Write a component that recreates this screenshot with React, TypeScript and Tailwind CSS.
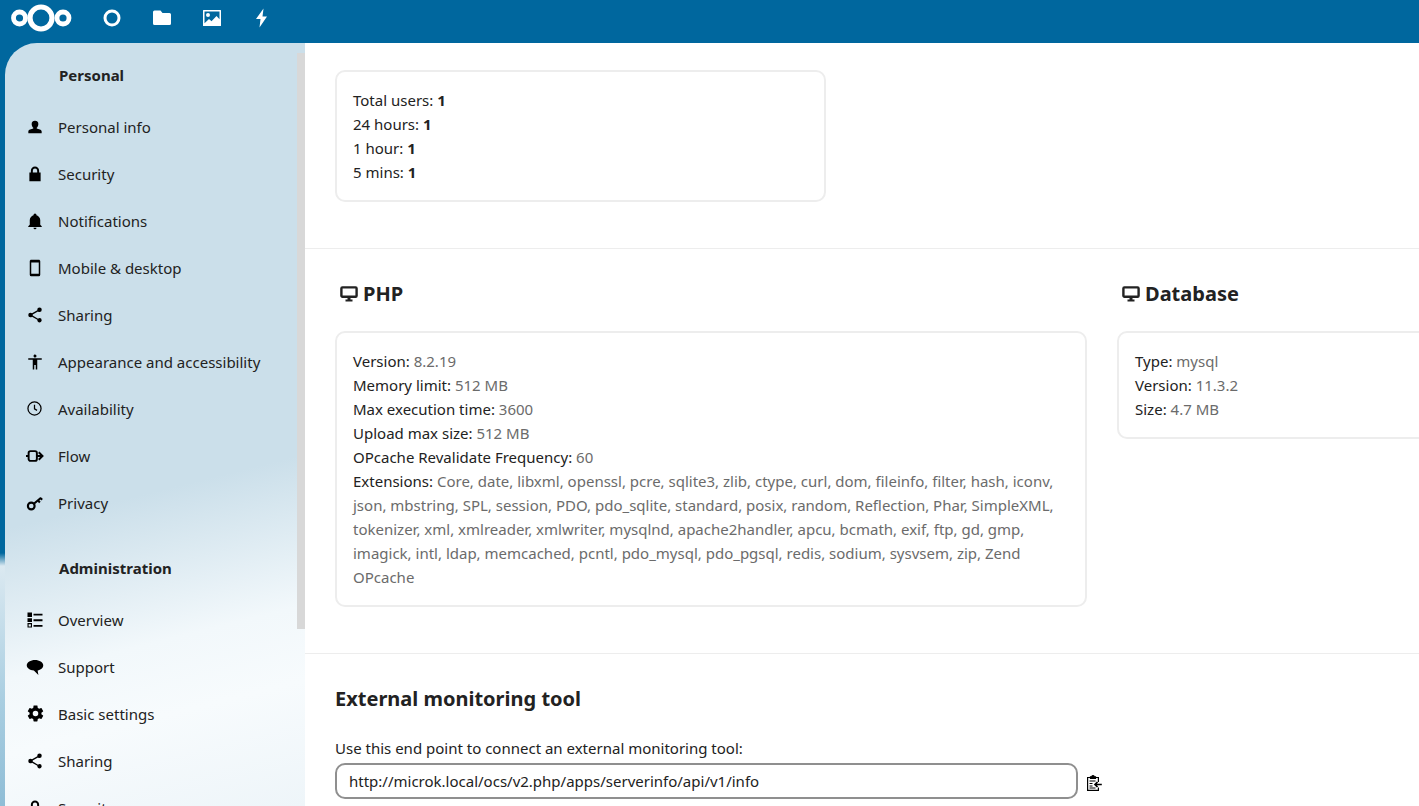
import React from "react";

const Solid = ({ d, className = "w-[18px] h-[18px]" }: { d: string; className?: string }) => (
  <svg viewBox="0 0 24 24" className={className} fill="currentColor">
    <path d={d} />
  </svg>
);

const person = "M12 2.500a5 5 0 0 1 5 5.300c0 2.300-1.200 4.400-2.400 5.200v1.400c2.600.9 7.400 1.600 7.400 4.300V21.500H2v-2.800c0-2.700 4.800-3.400 7.400-4.300V13C8.200 12.200 7 10.100 7 7.800A5 5 0 0 1 12 2.500Z";
const lock = "M12 2a5.500 5.500 0 0 0-5.500 5.500V10H4.500v11.500h15V10h-2V7.500A5.500 5.500 0 0 0 12 2Zm0 2.600a2.900 2.900 0 0 1 2.900 2.900V10H9.100V7.500A2.900 2.900 0 0 1 12 4.600Z";
const bell = "M21,19V20H3V19L5,17V11C5,7.900 7.030,5.170 10,4.290C10,4.190 10,4.100 10,4A2,2 0 0,1 12,2A2,2 0 0,1 14,4C14,4.100 14,4.190 14,4.290C16.970,5.170 19,7.900 19,11V17L21,19M14,21A2,2 0 0,1 12,23A2,2 0 0,1 10,21";
const phone = "M17,19.500H7V4.500H17M17,1H7C5.890,1 5,1.890 5,3V21A2,2 0 0,0 7,23H17A2,2 0 0,0 19,21V3C19,1.890 18.100,1 17,1Z";
const share = "M18,16.080C17.240,16.080 16.560,16.380 16.040,16.850L8.910,12.700C8.960,12.470 9,12.240 9,12C9,11.760 8.960,11.530 8.910,11.300L15.960,7.190C16.500,7.690 17.210,8 18,8A3,3 0 0,0 21,5A3,3 0 0,0 18,2A3,3 0 0,0 15,5C15,5.240 15.040,5.470 15.090,5.700L8.040,9.810C7.500,9.310 6.790,9 6,9A3,3 0 0,0 3,12A3,3 0 0,0 6,15C6.790,15 7.500,14.690 8.040,14.190L15.160,18.340C15.110,18.550 15.080,18.770 15.080,19C15.080,20.610 16.390,21.910 18,21.910C19.610,21.910 20.920,20.610 20.920,19A2.920,2.920 0 0,0 18,16.080Z";
const human = "M21 9H15V22H13V16H11V22H9V9H3V7H21M12 2A2 2 0 0 1 14 4A2 2 0 0 1 12 6C10.890 6 10 5.100 10 4C10 2.890 10.890 2 12 2Z";
const cog = "M12,15.500A3.500,3.500 0 0,1 8.500,12A3.500,3.500 0 0,1 12,8.500A3.500,3.500 0 0,1 15.500,12A3.500,3.500 0 0,1 12,15.500M19.430,12.970C19.470,12.650 19.500,12.330 19.500,12C19.500,11.670 19.470,11.340 19.430,11L21.540,9.370C21.730,9.220 21.780,8.950 21.660,8.730L19.660,5.270C19.540,5.050 19.270,4.960 19.050,5.050L16.560,6.050C16.040,5.660 15.500,5.320 14.870,5.070L14.500,2.420C14.460,2.180 14.250,2 14,2H10C9.750,2 9.540,2.180 9.500,2.420L9.130,5.070C8.500,5.320 7.960,5.660 7.440,6.050L4.950,5.050C4.730,4.960 4.460,5.050 4.340,5.270L2.340,8.730C2.210,8.950 2.270,9.220 2.460,9.370L4.570,11C4.530,11.340 4.500,11.670 4.500,12C4.500,12.330 4.530,12.650 4.570,12.970L2.460,14.630C2.270,14.780 2.210,15.050 2.340,15.270L4.340,18.730C4.460,18.950 4.730,19.030 4.950,18.950L7.440,17.940C7.960,18.340 8.500,18.680 9.130,18.930L9.500,21.580C9.540,21.820 9.750,22 10,22H14C14.250,22 14.460,21.820 14.500,21.580L14.870,18.930C15.500,18.670 16.040,18.340 16.560,17.940L19.050,18.950C19.270,19.030 19.540,18.950 19.660,18.730L21.660,15.270C21.780,15.050 21.730,14.780 21.540,14.630L19.430,12.970Z";
const bubble = "M12 2.500c5.800 0 11 3 11 7.300 0 3.600-3.500 6.300-7.500 6.900l1 5.800-6-5.700C5 16.300 1 13.400 1 9.800 1 5.500 6.200 2.500 12 2.500Z";

const Clock = () => (
  <svg viewBox="0 0 24 24" className="w-[15px] h-[15px] ml-[1px]" fill="none" stroke="currentColor" strokeWidth="2">
    <circle cx="12" cy="12" r="10.500" />
    <path d="M12 6v6.500l4 2.500" />
  </svg>
);

const FlowIcon = () => (
  <svg viewBox="0 0 24 24" className="w-[18px] h-[18px]" fill="none" stroke="currentColor" strokeWidth="2.600">
    <rect x="3.500" y="5.500" width="11" height="13" rx="2.500" />
    <path d="M0 12h3.500M14 12h7M17 7 22 12 17 17" />
  </svg>
);

const KeyIcon = () => (
  <svg viewBox="0 0 24 24" className="w-[18px] h-[18px]" fill="none" stroke="currentColor" strokeWidth="2.800">
    <circle cx="7" cy="16" r="4.500" />
    <path d="M10.500 13 20 5M16 8.500l2.500 2.800M19.500 5.500l2 2.200" />
  </svg>
);

const ListIcon = () => (
  <svg viewBox="0 0 24 24" className="w-[18px] h-[18px]" fill="currentColor">
    <path d="M2 2h6v6H2zM2 9.500h6v5H2zM10 3.500h12V6H10zM10 11h12v2.500H10zM10 18.500h12V21H10z" />
    <path d="M2 16h6v6H2zm1.500 1.500v3h3v-3z" fillRule="evenodd" />
  </svg>
);

const Monitor = () => (
  <svg viewBox="0 0 18 18" className="w-[18px] h-[18px] shrink-0" fill="none" stroke="currentColor">
    <rect x="1.400" y="2.400" width="15.200" height="9.400" rx="1" strokeWidth="2.400" />
    <path d="M5.500 15.500h7" strokeWidth="2" />
    <path d="M9 12v3" strokeWidth="3" />
  </svg>
);

const ClipboardIcon = () => (
  <svg viewBox="0 0 16 16" className="w-[16px] h-[16px]" fill="none" stroke="currentColor" strokeWidth="1.200">
    <path d="M4.500 2.500H1.600v12.900h10.800v-3M12.400 7V2.500H9.500" />
    <path d="M4.500 3.500h5V1.800H8.200a1.200 1.200 0 0 0-2.400 0H4.500Z" fill="currentColor" />
    <path d="M3.500 6h6M3.500 8.500h3M3.500 11h3M3.500 13h6" />
    <path d="M15.800 9.500H9M11.500 7 9 9.500l2.500 2.500" strokeWidth="1.700" />
  </svg>
);

const Logo = () => (
  <svg viewBox="0 0 62 32" className="w-[62px] h-[32px]" fill="none" stroke="white">
    <circle cx="30" cy="16" r="11" strokeWidth="5.200" />
    <circle cx="8.500" cy="16" r="6" strokeWidth="4.800" />
    <circle cx="52" cy="16" r="6" strokeWidth="4.800" />
  </svg>
);

const personalItems: { label: string; icon: React.ReactNode }[] = [
  { label: "Personal info", icon: <Solid d={person} className="w-[16px] h-[16px] ml-[1px]" /> },
  { label: "Security", icon: <Solid d={lock} /> },
  { label: "Notifications", icon: <Solid d={bell} /> },
  { label: "Mobile & desktop", icon: <Solid d={phone} /> },
  { label: "Sharing", icon: <Solid d={share} /> },
  { label: "Appearance and accessibility", icon: <Solid d={human} /> },
  { label: "Availability", icon: <Clock /> },
  { label: "Flow", icon: <FlowIcon /> },
  { label: "Privacy", icon: <KeyIcon /> },
];

const adminItems: { label: string; icon: React.ReactNode }[] = [
  { label: "Overview", icon: <ListIcon /> },
  { label: "Support", icon: <Solid d={bubble} /> },
  { label: "Basic settings", icon: <Solid d={cog} className="w-[19px] h-[19px]" /> },
  { label: "Sharing", icon: <Solid d={share} /> },
  { label: "Security", icon: <Solid d={lock} /> },
];

const NavList = ({ items }: { items: { label: string; icon: React.ReactNode }[] }) => (
  <ul>
    {items.map((item) => (
      <li key={item.label} className="h-[47px] flex items-center">
        <span className="w-[53px] pl-[21px] flex items-center text-black shrink-0">{item.icon}</span>
        <span className="text-[#222222]">{item.label}</span>
      </li>
    ))}
  </ul>
);

const Row = ({ k, v }: { k: string; v: string }) => (
  <div>
    {k}: <span className="text-[#6b6b6b]">{v}</span>
  </div>
);

const Card = ({ className = "", children }: { className?: string; children: React.ReactNode }) => (
  <div className={`border-2 border-[#ededed] rounded-[10px] p-4 ${className}`}>{children}</div>
);

export default function App() {
  return (
    <div
      className="h-[806px] w-[1419px] overflow-hidden flex flex-col text-[15px] leading-6 bg-[linear-gradient(180deg,#00679e_0,#00679e_553px,#dbe9f1_566px,#a9cee1_700px,#8fbdd6_806px)]"
      style={{ fontFamily: '"Noto Sans", sans-serif' }}
    >
      <header className="h-[43px] shrink-0 flex items-start pt-[2px] text-white">
        <div className="pl-[11px] w-[87px]">
          <Logo />
        </div>
        <nav className="flex items-center h-[32px]">
          <span className="w-[50px] flex justify-center">
            <svg viewBox="0 0 20 20" className="w-[20px] h-[20px]" fill="none" stroke="white" strokeWidth="3">
              <circle cx="10" cy="10" r="7" />
            </svg>
          </span>
          <span className="w-[50px] flex justify-center">
            <svg viewBox="0 0 20 20" className="w-[20px] h-[20px]" fill="white">
              <path d="M2.500 2.500h6l2 2.500h7a1.500 1.500 0 0 1 1.500 1.500v9a1.500 1.500 0 0 1-1.500 1.500h-15a1.500 1.500 0 0 1-1.500-1.500V4a1.500 1.500 0 0 1 1.500-1.500Z" />
            </svg>
          </span>
          <span className="w-[50px] flex justify-center">
            <svg viewBox="0 0 20 20" className="w-[20px] h-[20px]">
              <path fillRule="evenodd" fill="white" d="M1.500 2h17a.500.500 0 0 1 .500.500v15a.500.500 0 0 1-.500.500h-17a.500.500 0 0 1-.500-.500v-15A.500.500 0 0 1 1.500 2Zm1 1.500v11.800l4.500-4.300 2.500 2.300 5-5.300 3 3.300V3.500ZM6 5a2 2 0 1 1 0 4 2 2 0 0 1 0-4Z" />
            </svg>
          </span>
          <span className="w-[50px] flex justify-center">
            <svg viewBox="0 0 20 20" className="w-[20px] h-[20px]" fill="white">
              <path d="M11.500 0.500 4 11h4.500L7.500 19.500l7.500-11h-4.500Z" />
            </svg>
          </span>
        </nav>
      </header>

      <div className="flex-1 min-h-0 flex pl-[5px]">
        <aside className="w-[300px] shrink-0 rounded-tl-[32px] overflow-hidden relative bg-[linear-gradient(166deg,#cbdfea_0,#cbdfea_58%,#f2f8fb_76%,#f7fbfd_85%,#eef5f9_100%)]">
          <div className="pt-[20px]">
            <h3 className="h-[24px] pl-[54px] font-bold text-[15px] text-[#222222]">Personal</h3>
            <div className="h-[16px]" />
            <NavList items={personalItems} />
            <h3 className="h-[24px] mt-[30px] pl-[54px] font-bold text-[15px] text-[#222222]">Administration</h3>
            <div className="h-[16px]" />
            <NavList items={adminItems} />
          </div>
          {/* scrollbar thumb */}
          <div className="absolute right-0 top-[10px] w-[8px] h-[576px] bg-[#d8d8d8]" />
        </aside>

        <main className="flex-1 min-w-0 bg-white text-[#222222] overflow-hidden">
          <section className="pt-[27px] pb-[46px] px-[30px] border-b border-[#ededed]">
            <Card className="w-[491px]">
              <div>
                Total users: <b>1</b>
              </div>
              <div>
                24 hours: <b>1</b>
              </div>
              <div>
                1 hour: <b>1</b>
              </div>
              <div>
                5 mins: <b>1</b>
              </div>
            </Card>
          </section>

          <section className="pt-[30px] pb-[46px] pl-[30px] border-b border-[#ededed] flex gap-[30px] w-[1114px]">
            <div className="w-[752px] shrink-0">
              <h2 className="h-[30px] mb-[22px] pl-[5px] flex items-center gap-[5px] text-[20px] font-bold">
                <Monitor />
                PHP
              </h2>
              <Card>
                <Row k="Version" v="8.2.19" />
                <Row k="Memory limit" v="512 MB" />
                <Row k="Max execution time" v="3600" />
                <Row k="Upload max size" v="512 MB" />
                <Row k="OPcache Revalidate Frequency" v="60" />
                <Row
                  k="Extensions"
                  v="Core, date, libxml, openssl, pcre, sqlite3, zlib, ctype, curl, dom, fileinfo, filter, hash, iconv, json, mbstring, SPL, session, PDO, pdo_sqlite, standard, posix, random, Reflection, Phar, SimpleXML, tokenizer, xml, xmlreader, xmlwriter, mysqlnd, apache2handler, apcu, bcmath, exif, ftp, gd, gmp, imagick, intl, ldap, memcached, pcntl, pdo_mysql, pdo_pgsql, redis, sodium, sysvsem, zip, Zend OPcache"
                />
              </Card>
            </div>
            <div className="w-[400px] shrink-0">
              <h2 className="h-[30px] mb-[22px] pl-[5px] flex items-center gap-[5px] text-[20px] font-bold">
                <Monitor />
                Database
              </h2>
              <Card>
                <Row k="Type" v="mysql" />
                <Row k="Version" v="11.3.2" />
                <Row k="Size" v="4.7 MB" />
              </Card>
            </div>
          </section>

          <section className="pt-[30px] px-[30px]">
            <h2 className="h-[30px] mb-[22px] text-[20px] font-bold flex items-center">External monitoring tool</h2>
            <p className="h-[24px] mb-[3px]">Use this end point to connect an external monitoring tool:</p>
            <div className="flex items-center gap-[8px]">
              <input
                readOnly
                value="http://microk.local/ocs/v2.php/apps/serverinfo/api/v1/info"
                className="w-[743px] h-[36px] border-2 border-[#8f8f8f] rounded-[10px] px-[12px] outline-none text-[15px] text-[#222222] bg-white"
              />
              <span className="text-black pt-[3px]">
                <ClipboardIcon />
              </span>
            </div>
          </section>
        </main>
      </div>
    </div>
  );
}
